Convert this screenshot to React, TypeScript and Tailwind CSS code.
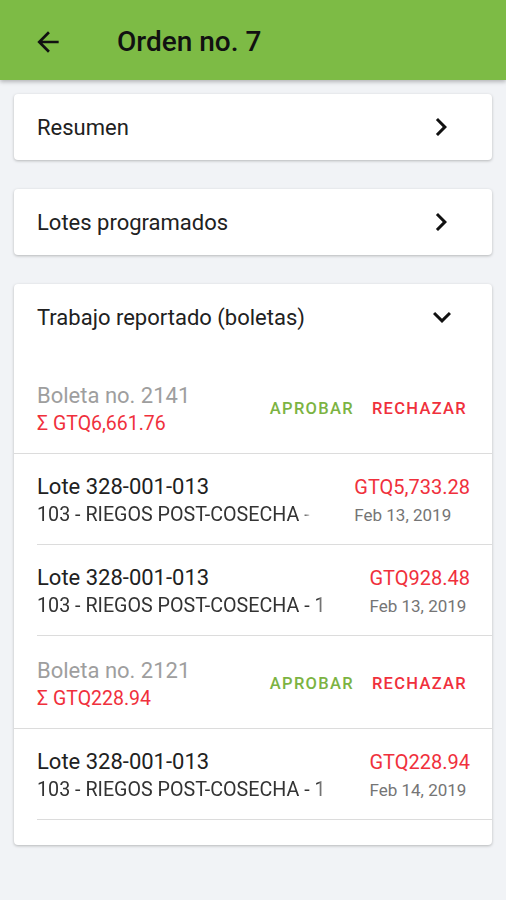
const ff = { fontFamily: 'Roboto, "Noto Sans", sans-serif' }

type Lote = { lote: string; desc: string; monto: string; fecha: string }
type Boleta = { numero: number; total: string; lotes: Lote[] }

const boletas: Boleta[] = [
  {
    numero: 2141,
    total: 'GTQ6,661.76',
    lotes: [
      { lote: '328-001-013', desc: '103 - RIEGOS POST-COSECHA - 103', monto: 'GTQ5,733.28', fecha: 'Feb 13, 2019' },
      { lote: '328-001-013', desc: '103 - RIEGOS POST-COSECHA - 103', monto: 'GTQ928.48', fecha: 'Feb 13, 2019' },
    ],
  },
  {
    numero: 2121,
    total: 'GTQ228.94',
    lotes: [
      { lote: '328-001-013', desc: '103 - RIEGOS POST-COSECHA - 103', monto: 'GTQ228.94', fecha: 'Feb 14, 2019' },
    ],
  },
]

// iconos material
function Icon({ d, className }: { d: string; className?: string }) {
  return (
    <svg viewBox="0 0 24 24" className={className} fill="#111">
      <path d={d} />
    </svg>
  )
}

const ARROW_BACK = 'M20 11H7.83l5.59-5.59L12 4l-8 8 8 8 1.41-1.41L7.83 13H20v-2z'
const CHEVRON_RIGHT = 'M10 6L8.59 7.41 13.17 12l-4.58 4.59L10 18l6-6z'
const EXPAND_MORE = 'M16.59 8.59L12 13.17 7.41 8.59 6 10l6 6 6-6z'

function SectionCard({ title }: { title: string }) {
  return (
    <div className="bg-white rounded shadow-[0_1px_3px_rgba(0,0,0,0.25)] h-[66px] flex items-center justify-between pl-[23px] pr-[33px]">
      <span className="text-[22px] text-[#212121]">{title}</span>
      <Icon d={CHEVRON_RIGHT} className="w-9 h-9" />
    </div>
  )
}

function LoteRow({ item }: { item: Lote }) {
  return (
    <div className="pl-[23px]">
      <div className="flex items-start justify-between pt-[19px] pb-[15px] pr-[22px]">
        <div className="min-w-0 flex-1 mr-[43px]">
          <p className="text-[22px] leading-[28px] text-[#212121] whitespace-nowrap">Lote {item.lote}</p>
          <p className="text-[19.7px] leading-[28px] text-[#333] whitespace-nowrap overflow-hidden [mask-image:linear-gradient(to_left,transparent,black_8px)]">
            {item.desc}
          </p>
        </div>
        <div className="shrink-0 flex flex-col items-start">
          <p className="text-[20px] leading-[28px] text-[#f0303c]">{item.monto}</p>
          <p className="text-[17px] leading-[28px] text-[#757575]">{item.fecha}</p>
        </div>
      </div>
      <div className="h-px bg-[#dcdcdc]" />
    </div>
  )
}

function BoletaBlock({ b }: { b: Boleta }) {
  return (
    <div>
      <div className="flex items-center justify-between pl-[23px] pr-[25px] pt-[21px] pb-[15px]">
        <div>
          <p className="text-[22px] leading-[28px] text-[#9e9e9e]">Boleta no. {b.numero}</p>
          <p className="text-[19.5px] leading-[28px] text-[#f0303c]">Σ {b.total}</p>
        </div>
        <div className="flex items-center gap-[18px] mt-[-2px]">
          <button className="text-[16.5px] font-medium tracking-[1.3px] text-[#7cb342]">APROBAR</button>
          <button className="text-[16.5px] font-medium tracking-[1.3px] text-[#f0303c]">RECHAZAR</button>
        </div>
      </div>
      <div className="h-px bg-[#dcdcdc]" />
      {b.lotes.map((l, i) => (
        <LoteRow key={i} item={l} />
      ))}
    </div>
  )
}

export default function App() {
  return (
    <div style={ff} className="w-[506px] h-[900px] bg-[#f1f3f6] overflow-hidden">
      <header className="h-20 bg-[#7dbb45] flex items-center pt-[4px] shadow-[0_2px_4px_rgba(0,0,0,0.25)] relative z-10">
        <div className="w-[117px] pl-8 flex items-center">
          <Icon d={ARROW_BACK} className="w-8 h-8" />
        </div>
        <h1 className="text-[28px] font-medium text-[#111]">Orden no. 7</h1>
      </header>

      <main className="px-[14px] pt-[14px] flex flex-col gap-[29px]">
        <SectionCard title="Resumen" />
        <SectionCard title="Lotes programados" />

        <div className="bg-white rounded shadow-[0_1px_3px_rgba(0,0,0,0.25)] pb-[25px]">
          <div className="h-[66px] flex items-center justify-between pl-[23px] pr-[32px] mb-[11px]">
            <span className="text-[22px] text-[#212121]">Trabajo reportado (boletas)</span>
            <Icon d={EXPAND_MORE} className="w-9 h-9" />
          </div>
          {boletas.map(b => (
            <BoletaBlock key={b.numero} b={b} />
          ))}
        </div>
      </main>
    </div>
  )
}
